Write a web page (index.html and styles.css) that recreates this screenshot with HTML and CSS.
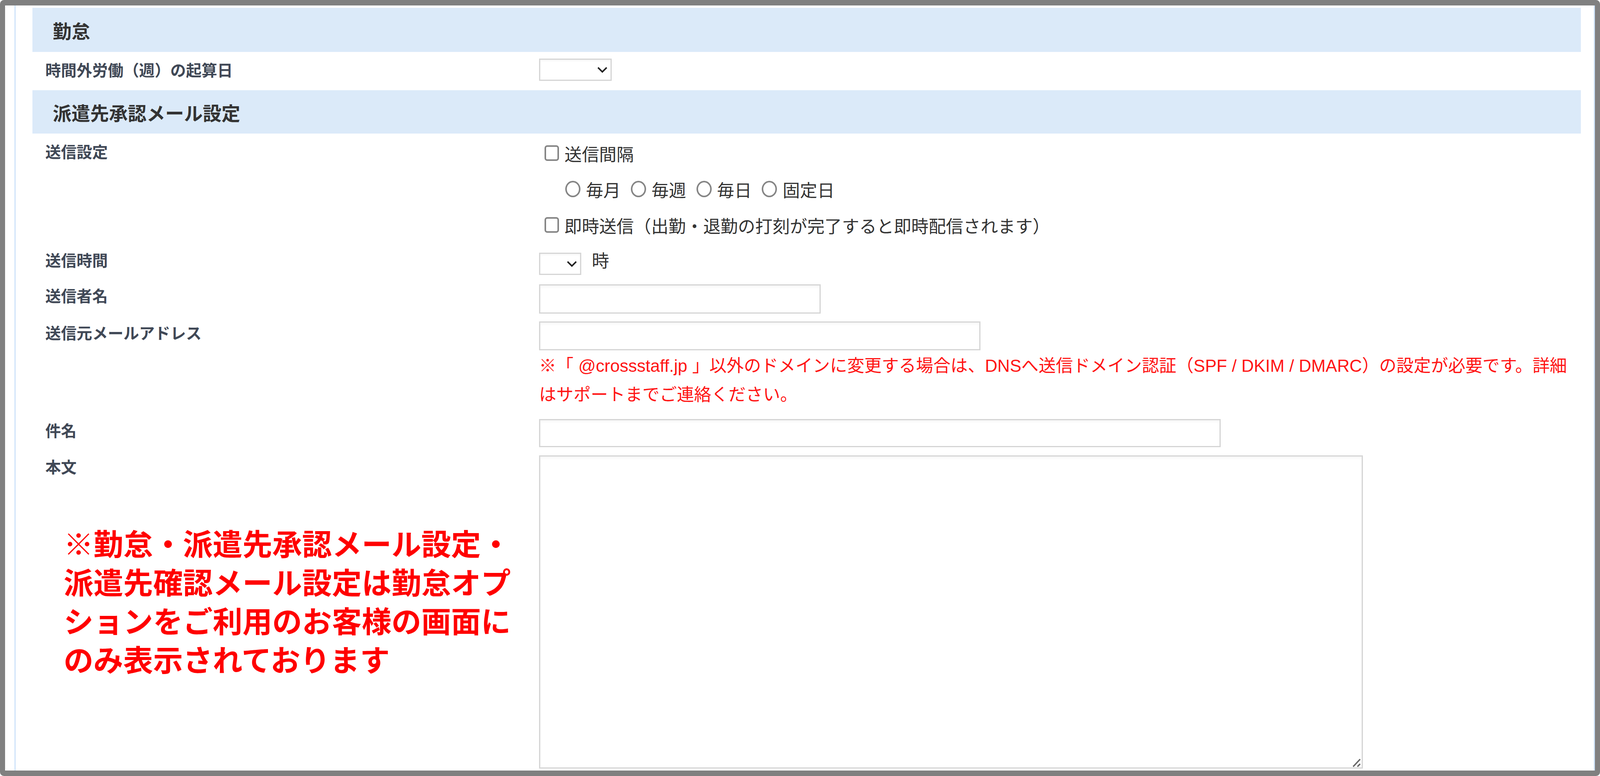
FILE: index.html
```html
<!DOCTYPE html>
<html lang="ja">
<head>
    <meta charset="UTF-8">
    <title>勤怠設定</title>
    <link rel="stylesheet" href="styles.css">
</head>
<body>

<div class="frame">
    <div class="inner">

        <h2 class="band band-first">勤怠</h2>
        <div class="row row-start">
            <div class="label">時間外労働（週）の起算日</div>
            <div class="select select-day">
                <select></select>
                <svg class="chevron" viewBox="0 0 28 16" preserveAspectRatio="none"><path d="M2 2 L14 13 L26 2"/></svg>
            </div>
        </div>

        <h2 class="band band-mail">派遣先承認メール設定</h2>
        <div class="row row-send">
            <div class="label">送信設定</div>
            <div>
                <label class="option-line"><input type="checkbox" class="check"><span>送信間隔</span></label>
                <div class="option-line option-radios">
                    <label class="radio-item"><input type="radio" name="interval" class="check radio"><span>毎月</span></label>
                    <label class="radio-item"><input type="radio" name="interval" class="check radio"><span>毎週</span></label>
                    <label class="radio-item"><input type="radio" name="interval" class="check radio"><span>毎日</span></label>
                    <label class="radio-item"><input type="radio" name="interval" class="check radio"><span>固定日</span></label>
                </div>
                <label class="option-line"><input type="checkbox" class="check"><span>即時送信（出勤・退勤の打刻が完了すると即時配信されます）</span></label>
            </div>
        </div>

        <div class="row row-time">
            <div class="label">送信時間</div>
            <div class="time-line">
                <div class="select select-hour">
                    <select></select>
                    <svg class="chevron" viewBox="0 0 28 16" preserveAspectRatio="none"><path d="M2 2 L14 13 L26 2"/></svg>
                </div>
                <span>時</span>
            </div>
        </div>

        <div class="row row-sender">
            <div class="label">送信者名</div>
            <div><input type="text" class="text-input input-sender"></div>
        </div>

        <div class="row row-from">
            <div class="label">送信元メールアドレス</div>
            <div>
                <input type="text" class="text-input input-from">
                <p class="note">※「 @crossstaff.jp 」以外のドメインに変更する場合は、DNSへ送信ドメイン認証（SPF / DKIM / DMARC）の設定が必要です。詳細はサポートまでご連絡ください。</p>
            </div>
        </div>

        <div class="row row-subject">
            <div class="label">件名</div>
            <div><input type="text" class="text-input input-subject"></div>
        </div>

        <div class="row row-body">
            <div class="label">本文</div>
            <div class="textarea-wrap">
                <textarea class="body-text"></textarea>
                <svg class="grip" viewBox="0 0 24 24"><path d="M20 2 L2 21 M20 14 L13 21"/></svg>
            </div>
        </div>

    </div>

    <!-- 注意書き（画面に重ねた赤字） -->
    <p class="overlay-note">※勤怠・派遣先承認メール設定・派遣先確認メール設定は勤怠オプションをご利用のお客様の画面にのみ表示されております</p>
</div>

</body>
</html>
```

FILE: styles.css
```css
* {
    box-sizing: border-box;
}

html, body {
    margin: 0;
    height: 100%;
    background-color: #fff;
}

body {
    font-family: "Liberation Sans", "Noto Sans CJK JP", sans-serif;
    font-size: 44.4px;
    color: #333;
    overflow: hidden;
}

/* 外枠 */
.frame {
    position: relative;
    height: 100vh;
    border-style: solid;
    border-color: #808080;
    border-width: 14px 13px;
    border-radius: 10px;
    overflow: hidden;
}

.inner {
    height: 100%;
    margin-left: 24px;
    padding: 6px 33px 0 43px;
    border-left: 3px solid #cfe3fa;
    border-right: 3px solid #cfe3fa;
    overflow: hidden;
}

/* 見出し帯 */
.band {
    display: flex;
    align-items: center;
    margin: 0;
    padding-left: 52px;
    font-size: 48px;
    font-weight: bold;
    color: #333;
    background-color: #dbeaf9;
}

.band-first {
    height: 113px;
}

.band-mail {
    height: 111px;
    margin-top: 20px;
}

/* 行 */
.row {
    display: grid;
    grid-template-columns: 1264px 1fr;
    padding-left: 33px;
}

.label {
    margin-top: 1px;
    font-size: 40px;
    font-weight: bold;
    line-height: 60px;
    color: #404856;
}

.row-start {
    padding-top: 17px;
}

.row-send {
    padding-top: 4px;
}

.row-send .label {
    margin-top: 14px;
}

.row-time {
    margin-top: 25px;
}

.row-time .label {
    margin-top: -9px;
}

.row-sender {
    margin-top: 24px;
}

.row-from {
    margin-top: 20px;
}

.row-subject {
    margin-top: 25px;
}

.row-body {
    margin-top: 21px;
}

/* チェックボックス・ラジオ */
.option-line {
    display: flex;
    align-items: center;
    height: 92px;
    padding-left: 14px;
}

.option-radios {
    padding-left: 67px;
}

.radio-item {
    display: flex;
    align-items: center;
    margin-right: 26px;
}

.check {
    appearance: none;
    flex: none;
    width: 37px;
    height: 40px;
    margin: 0 14px 0 0;
    border: 4px solid #858585;
    border-radius: 7px;
    background-color: #fff;
}

.radio {
    width: 39px;
    height: 42px;
    border-radius: 50%;
}

/* セレクト */
.select {
    position: relative;
    height: 57px;
}

.select select {
    appearance: none;
    display: block;
    width: 100%;
    height: 100%;
    border: 3px solid #d5d5d5;
    border-radius: 0;
    background-color: #fff;
    box-shadow: inset 0 3px 5px rgba(0, 0, 0, 0.04);
}

.select-day {
    width: 186px;
}

.select-hour {
    width: 108px;
}

.chevron {
    position: absolute;
    top: 21px;
    right: 11px;
    width: 26px;
    height: 16px;
    fill: none;
    stroke: #222;
    stroke-width: 4;
}

.time-line {
    display: flex;
    gap: 27px;
    line-height: 44px;
}

/* テキスト入力 */
.text-input {
    display: block;
    border: 3px solid #d5d5d5;
    border-radius: 0;
    background-color: #fff;
    box-shadow: inset 0 4px 6px rgba(0, 0, 0, 0.04);
}

.input-sender {
    width: 721px;
    height: 75px;
}

.input-from {
    width: 1130px;
    height: 74px;
}

.input-subject {
    width: 1745px;
    height: 72px;
}

.note {
    margin: 3px 0 0;
    font-size: 44.1px;
    line-height: 74px;
    color: #ff1414;
}

/* 本文 */
.textarea-wrap {
    position: relative;
    width: 2109px;
    height: 802px;
}

.body-text {
    display: block;
    width: 100%;
    height: 100%;
    border: 3px solid #d5d5d5;
    border-radius: 0;
    resize: none;
    box-shadow: inset 0 4px 6px rgba(0, 0, 0, 0.04);
}

.grip {
    position: absolute;
    right: 3px;
    bottom: 2px;
    width: 24px;
    height: 24px;
    fill: none;
    stroke: #666;
    stroke-width: 3.5;
}

/* 重ねた注意書き */
.overlay-note {
    position: absolute;
    top: 1332px;
    left: 150px;
    width: 1156px;
    margin: 0;
    font-size: 76.3px;
    font-weight: bold;
    line-height: 99px;
    color: #f00;
}
```
